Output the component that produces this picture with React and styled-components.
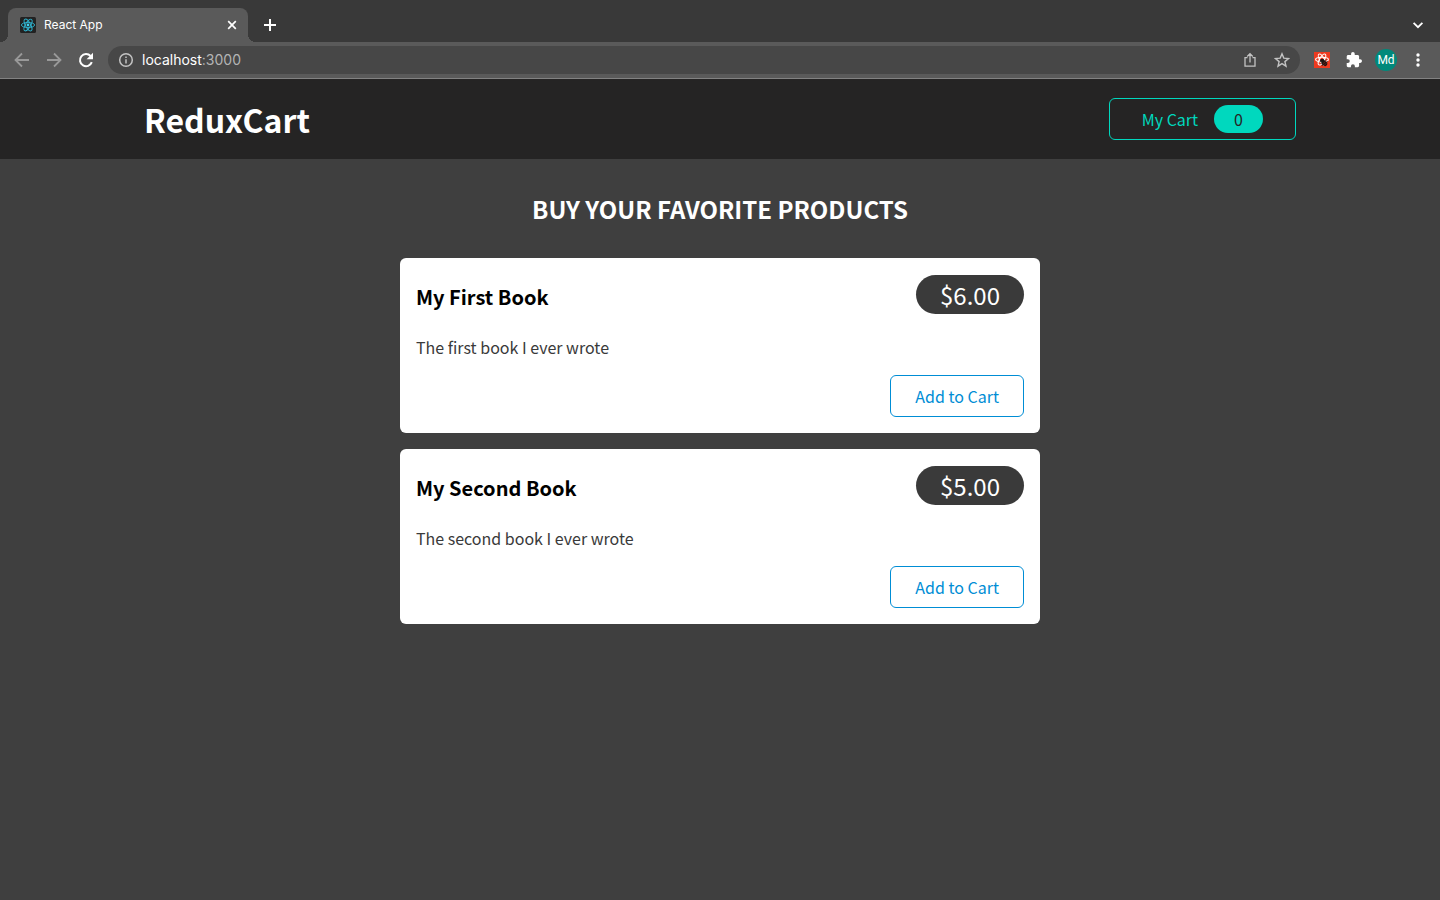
import React from "react";
import styled, { createGlobalStyle } from "styled-components";

const GlobalStyle = createGlobalStyle`
  * { box-sizing: border-box; }
  body {
    margin: 0;
    background: #3f3f3f;
    color: #3a3a3a;
    font: 16px/24px "Noto Sans CJK JP", sans-serif;
  }
  button, input { font: inherit; }
`;

const Browser = styled.div`
  font-family: Roboto, sans-serif;
  color: #fff;
`;

const TabStrip = styled.div`
  display: flex;
  align-items: flex-end;
  height: 42px;
  padding: 0 12px 0 8px;
  background: #393939;
`;

const Tab = styled.div`
  position: relative;
  display: flex;
  align-items: center;
  gap: 8px;
  width: 240px;
  height: 34px;
  padding: 0 8px 0 12px;
  border-radius: 8px 8px 0 0;
  background: #5a5a5a;
  font-family: Inter, sans-serif;
  font-size: 12px;
  line-height: 16px;

  &::before, &::after {
    content: "";
    position: absolute;
    bottom: 0;
    width: 8px;
    height: 8px;
  }
  &::before {
    right: 100%;
    background: radial-gradient(circle at 0 0, transparent 8px, #5a5a5a 8px);
  }
  &::after {
    left: 100%;
    background: radial-gradient(circle at 100% 0, transparent 8px, #5a5a5a 8px);
  }
`;

const TabTitle = styled.span`
  flex: 1;
`;

const IconButton = styled.button`
  display: flex;
  align-items: center;
  justify-content: center;
  flex: none;
  width: ${(p) => p.$size || 32}px;
  height: ${(p) => p.$size || 32}px;
  padding: 0;
  border: 0;
  background: none;
  color: ${(p) => p.$color || "#fff"};
`;

const StripButton = styled(IconButton)`
  height: 34px;
`;

const NewTab = styled(StripButton)`
  margin-left: 6px;
  margin-right: auto;
`;

const Toolbar = styled.div`
  display: flex;
  align-items: center;
  height: 37px;
  padding: 0 6px;
  border-bottom: 1px solid #828282;
  background: #5a5a5a;
`;

const AddressBar = styled.div`
  display: flex;
  align-items: center;
  flex: 1;
  height: 28px;
  margin: 0 6px;
  padding: 0 2px 0 10px;
  border-radius: 14px;
  background: #474747;
  color: #c3c3c3;
  font-size: 14px;
  line-height: 20px;
`;

const Address = styled.a`
  flex: 1;
  margin-left: 8px;
  color: #b4b4b4;
  font-family: Inter, sans-serif;
  text-decoration: none;

  span { color: #fff; }
`;

const Avatar = styled.span`
  display: flex;
  align-items: center;
  justify-content: center;
  width: 22px;
  height: 22px;
  border-radius: 50%;
  background: #00897b;
  font-size: 12px;
  line-height: 16px;
`;

const Header = styled.header`
  display: flex;
  align-items: center;
  justify-content: space-between;
  height: 80px;
  padding: 0 10%;
  background: #252424;
`;

const Logo = styled.h1`
  margin: 0;
  color: #fff;
  font-size: 32px;
  line-height: 48px;
`;

const OutlineButton = styled.button`
  display: flex;
  align-items: center;
  height: 42px;
  gap: 16px;
  padding: 0 ${(p) => p.$pad}px;
  border: 1px solid ${(p) => p.$color};
  border-radius: 6px;
  background: transparent;
  color: ${(p) => p.$color};
`;

const Badge = styled.span`
  padding: 2px 20px;
  border-radius: 30px;
  background: #00d8be;
  color: #252424;
`;

const Products = styled.main`
  width: 90%;
  max-width: 640px;
  margin: 32px auto;
`;

const SectionTitle = styled.h2`
  margin: 0 0 31px;
  color: #fff;
  font-size: 24px;
  line-height: 36px;
  text-align: center;
  text-transform: uppercase;
`;

const ProductList = styled.ul`
  display: flex;
  flex-direction: column;
  gap: 16px;
  margin: 0;
  padding: 0;
  list-style: none;
`;

const Card = styled.li`
  padding: 16px;
  border-radius: 6px;
  background: #fff;
`;

const CardHeader = styled.header`
  display: flex;
  align-items: center;
  justify-content: space-between;
  height: 41px;
`;

const CardTitle = styled.h3`
  margin: 0;
  padding-top: 5px;
  color: #000;
  font-size: 20px;
  line-height: 32px;
`;

const Price = styled.div`
  padding: 2px 24px 1px;
  border-radius: 30px;
  background: #3a3a3a;
  color: #fff;
  font-size: 24px;
  line-height: 36px;
`;

const Description = styled.p`
  margin: 20px 0 16px;
`;

const Actions = styled.div`
  display: flex;
  justify-content: flex-end;
`;

const Ellipses = () =>
  [30, 90, 150].map((angle) => (
    <ellipse key={angle} cx="8" cy="8" rx="6.600" ry="2.600" transform={`rotate(${angle} 8 8)`} />
  ));

const ReactIcon = () => (
  <svg width="16" height="16" viewBox="0 0 16 16">
    <rect width="16" height="16" rx="1.5" fill="#222" />
    <g fill="none" stroke="#2fb4d0" strokeWidth="0.9" transform="rotate(30 8 8)">
      <Ellipses />
    </g>
    <circle cx="8" cy="8" r="1.4" fill="#3fd0ee" />
  </svg>
);

const ExtensionIcon = () => (
  <svg width="16" height="16" viewBox="0 0 16 16">
    <rect width="16" height="16" fill="#ee3a20" />
    <g fill="none" stroke="#fff" strokeWidth="1.1">
      <ellipse cx="8" cy="7.5" rx="6.4" ry="2.3" />
      <ellipse cx="8" cy="7.5" rx="6.2" ry="2.3" transform="rotate(60 8 7.5)" />
      <ellipse cx="8" cy="7.5" rx="6.2" ry="2.3" transform="rotate(120 8 7.5)" />
    </g>
    <ellipse cx="8.200" cy="8.400" rx="2.200" ry="1.700" fill="#201412" />
    <ellipse cx="10.300" cy="11.200" rx="3.200" ry="2.500" transform="rotate(40 10.300 11.200)" fill="#201412" />
    <path d="M5.800 9.500l1.500-.5M8 14l.6-1.500M12 7.500l-1 1.500M13.800 9.500l-1.500.5" stroke="#201412" strokeWidth=".8" />
    <path d="M8.800 11.800l2.800-2.400M10.200 13.200l2.500-2.200" stroke="#b52b1a" strokeWidth=".5" />
  </svg>
);

const Icon = ({ size = 18, width = 2, children }) => (
  <svg width={size} height={size} viewBox={`0 0 ${size} ${size}`} fill="none" stroke="currentColor" strokeWidth={width}>
    {children}
  </svg>
);

const products = [
  { id: 1, title: "My First Book", price: 6, description: "The first book I ever wrote" },
  { id: 2, title: "My Second Book", price: 5, description: "The second book I ever wrote" },
];

export default function App() {
  return (
    <>
      <GlobalStyle />
      <Browser>
        <TabStrip>
          <Tab>
            <ReactIcon />
            <TabTitle>React App</TabTitle>
            <IconButton $size={16} aria-label="Close tab">
              <Icon size={16} width={1.7}><path d="M4.2 4.2l7.6 7.6M11.8 4.2l-7.6 7.6" /></Icon>
            </IconButton>
          </Tab>
          <NewTab aria-label="New tab">
            <Icon><path d="M9 3v12M3 9h12" /></Icon>
          </NewTab>
          <StripButton $size={20} aria-label="Search tabs">
            <Icon><path d="M4.600 6.800l4.400 4.400 4.400-4.400" strokeWidth="1.8" /></Icon>
          </StripButton>
        </TabStrip>
        <Toolbar>
          <IconButton $color="#999" aria-label="Back">
            <Icon width={1.8}><path d="M16 9H3M9 2.5L2.5 9 9 15.5" /></Icon>
          </IconButton>
          <IconButton $color="#999" aria-label="Forward">
            <Icon width={1.8}><path d="M2 9h13M9 2.5L15.500 9 9 15.5" /></Icon>
          </IconButton>
          <IconButton aria-label="Reload">
            <Icon><path d="M14.800 11.200A6.100 6.100 0 1 1 13.600 5" /><path d="M16 1.800v6.400H9.600z" fill="currentColor" stroke="none" /></Icon>
          </IconButton>
          <AddressBar>
            <Icon size={16} width={1.5}>
              <circle cx="8" cy="8" r="6.300" /><path d="M8 7.200v4.200M8 4.400v1.600" />
            </Icon>
            <Address href="http://localhost:3000"><span>localhost</span>:3000</Address>
            <IconButton $color="#c3c3c3" aria-label="Share">
              <Icon size={16} width={1.3}>
                <path d="M5.500 5.700H3v8.500h10V5.700h-2.500M8 10.500V2M5.200 4.500L8 1.700l2.800 2.800" />
              </Icon>
            </IconButton>
            <IconButton $color="#c3c3c3" aria-label="Bookmark">
              <Icon size={16} width={1.4}>
                <path d="M8 1.800l1.800 4.300 4.700.4-3.600 3.100 1.100 4.600L8 11.700l-4 2.500 1.100-4.600L1.500 6.500l4.700-.4z" />
              </Icon>
            </IconButton>
          </AddressBar>
          <IconButton aria-label="Developer tools"><ExtensionIcon /></IconButton>
          <IconButton aria-label="Extensions">
            <svg width="16" height="16" viewBox="1 1 22 22" fill="currentColor">
              <path d="M20.500 11H19V7c0-1.100-.9-2-2-2h-4V3.500a2.500 2.500 0 0 0-5 0V5H4c-1.100 0-2 .9-2 2v3.800h1.500a2.700 2.700 0 0 1 0 5.400H2V20c0 1.100.9 2 2 2h3.800v-1.500a2.700 2.700 0 0 1 5.400 0V22H17c1.100 0 2-.9 2-2v-4h1.500a2.500 2.500 0 0 0 0-5z" />
            </svg>
          </IconButton>
          <IconButton aria-label="Profile"><Avatar>Md</Avatar></IconButton>
          <IconButton aria-label="Menu">
            <svg width="18" height="18" viewBox="0 0 18 18" fill="currentColor">
              <circle cx="9" cy="4" r="1.700" /><circle cx="9" cy="9" r="1.700" /><circle cx="9" cy="14" r="1.700" />
            </svg>
          </IconButton>
        </Toolbar>
      </Browser>
      <Header>
        <Logo>ReduxCart</Logo>
        <OutlineButton $color="#00d8be" $pad={32}>
          My Cart <Badge>0</Badge>
        </OutlineButton>
      </Header>
      <Products>
        <SectionTitle>Buy your favorite products</SectionTitle>
        <ProductList>
          {products.map(({ id, title, price, description }) => (
            <Card key={id}>
              <CardHeader>
                <CardTitle>{title}</CardTitle>
                <Price>${price.toFixed(2)}</Price>
              </CardHeader>
              <Description>{description}</Description>
              <Actions>
                <OutlineButton $color="#008dd5" $pad={24}>Add to Cart</OutlineButton>
              </Actions>
            </Card>
          ))}
        </ProductList>
      </Products>
    </>
  );
}
